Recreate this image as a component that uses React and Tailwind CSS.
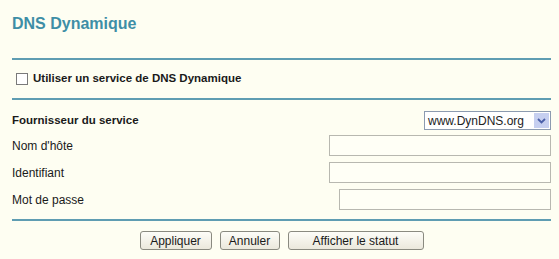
export default function App() {
    const fields = [
        { label: "Nom d'hôte", w: "w-[222px]" },
        { label: "Identifiant", w: "w-[222px]" },
        { label: "Mot de passe", w: "w-[212px]" },
    ];

    return (
        <div className="w-[559px] h-[259px] bg-[#fefef2] pl-[12px] pr-[8px] pt-[14px] font-['Liberation_Sans',Arial,sans-serif] text-[#1a1a1a] overflow-hidden">
            {/* Title */}
            <h1 className="text-[16px] leading-[20px] font-bold text-[#3e8ea6]">DNS Dynamique</h1>

            <div className="mt-[24px] h-[2px] bg-[#5f9db2]" />

            {/* Enable checkbox */}
            <label className="flex items-center gap-[5px] h-[38px] pl-[4px]">
                <span className="w-[12px] h-[12px] border border-[#7a7a7a] bg-white" />
                <span className="text-[11.5px] font-bold">Utiliser un service de DNS Dynamique</span>
            </label>

            <div className="h-[2px] bg-[#5f9db2]" />

            {/* Provider */}
            <div className="flex items-center justify-between mt-[11px] h-[19px]">
                <span className="text-[11.5px] font-bold">Fournisseur du service</span>
                <div className="flex items-center w-[127px] h-[19px] border border-[#8c9bb0] bg-white">
                    <span className="flex-1 pl-[3px] text-[12px] text-[#222]">www.DynDNS.org</span>
                    <span className="w-[15px] h-[15px] mr-[1px] bg-[#c6cff0] flex items-center justify-center">
                        <svg width="9" height="6" viewBox="0 0 9 6">
                            <path d="M1 1 L4.5 4.5 L8 1" fill="none" stroke="#4a5fa8" strokeWidth="1.8" />
                        </svg>
                    </span>
                </div>
            </div>

            {/* Inputs */}
            <div className="flex flex-col gap-[6px] mt-[5px]">
                {fields.map((f) => (
                    <div key={f.label} className="flex items-center justify-between h-[21px]">
                        <span className="text-[12px]">{f.label}</span>
                        <span className={`${f.w} h-[21px] border border-[#b8b8b0] bg-[#fffff6]`} />
                    </div>
                ))}
            </div>

            <div className="mt-[9px] h-[2px] bg-[#5f9db2]" />

            {/* Buttons */}
            <div className="flex justify-center gap-[8px] mt-[10px]">
                <button className="w-[72px] h-[19px] rounded-[3px] border border-[#8a8a80] bg-gradient-to-b from-[#fdfdf8] to-[#ebe8dc] text-[12px] leading-none">Appliquer</button>
                <button className="w-[60px] h-[19px] rounded-[3px] border border-[#8a8a80] bg-gradient-to-b from-[#fdfdf8] to-[#ebe8dc] text-[12px] leading-none">Annuler</button>
                <button className="w-[136px] h-[19px] rounded-[3px] border border-[#8a8a80] bg-gradient-to-b from-[#fdfdf8] to-[#ebe8dc] text-[12px] leading-none">Afficher le statut</button>
            </div>
        </div>
    );
}
